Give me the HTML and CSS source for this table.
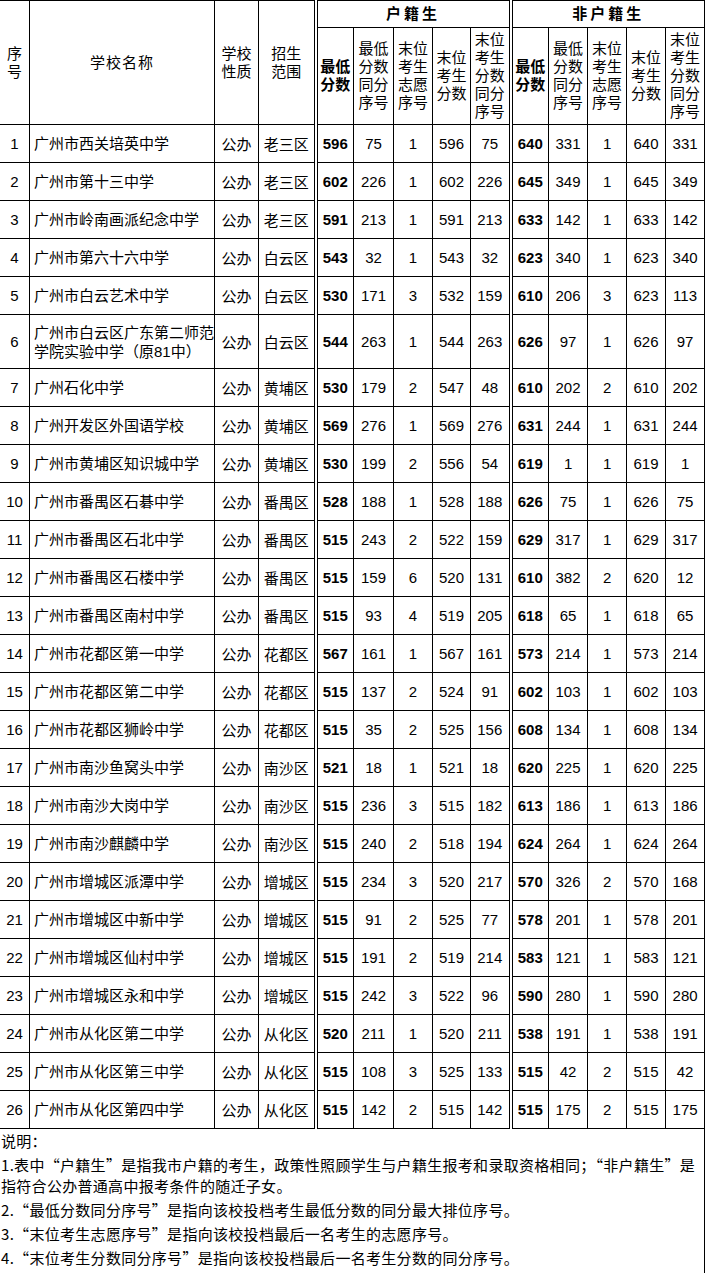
FILE: index.html
```html
<!DOCTYPE html>
<html lang="zh-CN">
<head>
<meta charset="utf-8">
<title>广州市公办普通高中录取分数</title>
<link rel="stylesheet" href="styles.css">
</head>
<body>
<div class="page">
<table class="score-table">
  <colgroup>
    <col class="c-no"><col class="c-name"><col class="c-type"><col class="c-area">
    <col class="c-a1"><col class="c-a2"><col class="c-a3"><col class="c-a4"><col class="c-a5">
    <col class="c-b1"><col class="c-b2"><col class="c-b3"><col class="c-b4"><col class="c-b5">
  </colgroup>
  <thead>
    <tr class="h1">
      <th rowspan="2" class="hd">序<br>号</th>
      <th rowspan="2" class="hd wide">学校名称</th>
      <th rowspan="2" class="hd">学校<br>性质</th>
      <th rowspan="2" class="hd">招生<br>范围</th>
      <th colspan="5" class="group sep">户籍生</th>
      <th colspan="5" class="group sep">非户籍生</th>
    </tr>
    <tr class="h2">
      <th class="hd bold sep">最低<br>分数</th>
      <th class="hd">最低<br>分数<br>同分<br>序号</th>
      <th class="hd">末位<br>考生<br>志愿<br>序号</th>
      <th class="hd">末位<br>考生<br>分数</th>
      <th class="hd">末位<br>考生<br>分数<br>同分<br>序号</th>
      <th class="hd bold sep">最低<br>分数</th>
      <th class="hd">最低<br>分数<br>同分<br>序号</th>
      <th class="hd">末位<br>考生<br>志愿<br>序号</th>
      <th class="hd">末位<br>考生<br>分数</th>
      <th class="hd">末位<br>考生<br>分数<br>同分<br>序号</th>
    </tr>
  </thead>
  <tbody>
    <tr><td class="num">1</td><td class="name">广州市西关培英中学</td><td class="cn">公办</td><td class="cn">老三区</td><td class="num b sep">596</td><td class="num">75</td><td class="num">1</td><td class="num">596</td><td class="num">75</td><td class="num b sep">640</td><td class="num">331</td><td class="num">1</td><td class="num">640</td><td class="num">331</td></tr>
    <tr><td class="num">2</td><td class="name">广州市第十三中学</td><td class="cn">公办</td><td class="cn">老三区</td><td class="num b sep">602</td><td class="num">226</td><td class="num">1</td><td class="num">602</td><td class="num">226</td><td class="num b sep">645</td><td class="num">349</td><td class="num">1</td><td class="num">645</td><td class="num">349</td></tr>
    <tr><td class="num">3</td><td class="name">广州市岭南画派纪念中学</td><td class="cn">公办</td><td class="cn">老三区</td><td class="num b sep">591</td><td class="num">213</td><td class="num">1</td><td class="num">591</td><td class="num">213</td><td class="num b sep">633</td><td class="num">142</td><td class="num">1</td><td class="num">633</td><td class="num">142</td></tr>
    <tr><td class="num">4</td><td class="name">广州市第六十六中学</td><td class="cn">公办</td><td class="cn">白云区</td><td class="num b sep">543</td><td class="num">32</td><td class="num">1</td><td class="num">543</td><td class="num">32</td><td class="num b sep">623</td><td class="num">340</td><td class="num">1</td><td class="num">623</td><td class="num">340</td></tr>
    <tr><td class="num">5</td><td class="name">广州市白云艺术中学</td><td class="cn">公办</td><td class="cn">白云区</td><td class="num b sep">530</td><td class="num">171</td><td class="num">3</td><td class="num">532</td><td class="num">159</td><td class="num b sep">610</td><td class="num">206</td><td class="num">3</td><td class="num">623</td><td class="num">113</td></tr>
    <tr class="tall"><td class="num">6</td><td class="name">广州市白云区广东第二师范<br>学院实验中学（原81中）</td><td class="cn">公办</td><td class="cn">白云区</td><td class="num b sep">544</td><td class="num">263</td><td class="num">1</td><td class="num">544</td><td class="num">263</td><td class="num b sep">626</td><td class="num">97</td><td class="num">1</td><td class="num">626</td><td class="num">97</td></tr>
    <tr><td class="num">7</td><td class="name">广州石化中学</td><td class="cn">公办</td><td class="cn">黄埔区</td><td class="num b sep">530</td><td class="num">179</td><td class="num">2</td><td class="num">547</td><td class="num">48</td><td class="num b sep">610</td><td class="num">202</td><td class="num">2</td><td class="num">610</td><td class="num">202</td></tr>
    <tr><td class="num">8</td><td class="name">广州开发区外国语学校</td><td class="cn">公办</td><td class="cn">黄埔区</td><td class="num b sep">569</td><td class="num">276</td><td class="num">1</td><td class="num">569</td><td class="num">276</td><td class="num b sep">631</td><td class="num">244</td><td class="num">1</td><td class="num">631</td><td class="num">244</td></tr>
    <tr><td class="num">9</td><td class="name">广州市黄埔区知识城中学</td><td class="cn">公办</td><td class="cn">黄埔区</td><td class="num b sep">530</td><td class="num">199</td><td class="num">2</td><td class="num">556</td><td class="num">54</td><td class="num b sep">619</td><td class="num">1</td><td class="num">1</td><td class="num">619</td><td class="num">1</td></tr>
    <tr><td class="num">10</td><td class="name">广州市番禺区石碁中学</td><td class="cn">公办</td><td class="cn">番禺区</td><td class="num b sep">528</td><td class="num">188</td><td class="num">1</td><td class="num">528</td><td class="num">188</td><td class="num b sep">626</td><td class="num">75</td><td class="num">1</td><td class="num">626</td><td class="num">75</td></tr>
    <tr><td class="num">11</td><td class="name">广州市番禺区石北中学</td><td class="cn">公办</td><td class="cn">番禺区</td><td class="num b sep">515</td><td class="num">243</td><td class="num">2</td><td class="num">522</td><td class="num">159</td><td class="num b sep">629</td><td class="num">317</td><td class="num">1</td><td class="num">629</td><td class="num">317</td></tr>
    <tr><td class="num">12</td><td class="name">广州市番禺区石楼中学</td><td class="cn">公办</td><td class="cn">番禺区</td><td class="num b sep">515</td><td class="num">159</td><td class="num">6</td><td class="num">520</td><td class="num">131</td><td class="num b sep">610</td><td class="num">382</td><td class="num">2</td><td class="num">620</td><td class="num">12</td></tr>
    <tr><td class="num">13</td><td class="name">广州市番禺区南村中学</td><td class="cn">公办</td><td class="cn">番禺区</td><td class="num b sep">515</td><td class="num">93</td><td class="num">4</td><td class="num">519</td><td class="num">205</td><td class="num b sep">618</td><td class="num">65</td><td class="num">1</td><td class="num">618</td><td class="num">65</td></tr>
    <tr><td class="num">14</td><td class="name">广州市花都区第一中学</td><td class="cn">公办</td><td class="cn">花都区</td><td class="num b sep">567</td><td class="num">161</td><td class="num">1</td><td class="num">567</td><td class="num">161</td><td class="num b sep">573</td><td class="num">214</td><td class="num">1</td><td class="num">573</td><td class="num">214</td></tr>
    <tr><td class="num">15</td><td class="name">广州市花都区第二中学</td><td class="cn">公办</td><td class="cn">花都区</td><td class="num b sep">515</td><td class="num">137</td><td class="num">2</td><td class="num">524</td><td class="num">91</td><td class="num b sep">602</td><td class="num">103</td><td class="num">1</td><td class="num">602</td><td class="num">103</td></tr>
    <tr><td class="num">16</td><td class="name">广州市花都区狮岭中学</td><td class="cn">公办</td><td class="cn">花都区</td><td class="num b sep">515</td><td class="num">35</td><td class="num">2</td><td class="num">525</td><td class="num">156</td><td class="num b sep">608</td><td class="num">134</td><td class="num">1</td><td class="num">608</td><td class="num">134</td></tr>
    <tr><td class="num">17</td><td class="name">广州市南沙鱼窝头中学</td><td class="cn">公办</td><td class="cn">南沙区</td><td class="num b sep">521</td><td class="num">18</td><td class="num">1</td><td class="num">521</td><td class="num">18</td><td class="num b sep">620</td><td class="num">225</td><td class="num">1</td><td class="num">620</td><td class="num">225</td></tr>
    <tr><td class="num">18</td><td class="name">广州市南沙大岗中学</td><td class="cn">公办</td><td class="cn">南沙区</td><td class="num b sep">515</td><td class="num">236</td><td class="num">3</td><td class="num">515</td><td class="num">182</td><td class="num b sep">613</td><td class="num">186</td><td class="num">1</td><td class="num">613</td><td class="num">186</td></tr>
    <tr><td class="num">19</td><td class="name">广州市南沙麒麟中学</td><td class="cn">公办</td><td class="cn">南沙区</td><td class="num b sep">515</td><td class="num">240</td><td class="num">2</td><td class="num">518</td><td class="num">194</td><td class="num b sep">624</td><td class="num">264</td><td class="num">1</td><td class="num">624</td><td class="num">264</td></tr>
    <tr><td class="num">20</td><td class="name">广州市增城区派潭中学</td><td class="cn">公办</td><td class="cn">增城区</td><td class="num b sep">515</td><td class="num">234</td><td class="num">3</td><td class="num">520</td><td class="num">217</td><td class="num b sep">570</td><td class="num">326</td><td class="num">2</td><td class="num">570</td><td class="num">168</td></tr>
    <tr><td class="num">21</td><td class="name">广州市增城区中新中学</td><td class="cn">公办</td><td class="cn">增城区</td><td class="num b sep">515</td><td class="num">91</td><td class="num">2</td><td class="num">525</td><td class="num">77</td><td class="num b sep">578</td><td class="num">201</td><td class="num">1</td><td class="num">578</td><td class="num">201</td></tr>
    <tr><td class="num">22</td><td class="name">广州市增城区仙村中学</td><td class="cn">公办</td><td class="cn">增城区</td><td class="num b sep">515</td><td class="num">191</td><td class="num">2</td><td class="num">519</td><td class="num">214</td><td class="num b sep">583</td><td class="num">121</td><td class="num">1</td><td class="num">583</td><td class="num">121</td></tr>
    <tr><td class="num">23</td><td class="name">广州市增城区永和中学</td><td class="cn">公办</td><td class="cn">增城区</td><td class="num b sep">515</td><td class="num">242</td><td class="num">3</td><td class="num">522</td><td class="num">96</td><td class="num b sep">590</td><td class="num">280</td><td class="num">1</td><td class="num">590</td><td class="num">280</td></tr>
    <tr><td class="num">24</td><td class="name">广州市从化区第二中学</td><td class="cn">公办</td><td class="cn">从化区</td><td class="num b sep">520</td><td class="num">211</td><td class="num">1</td><td class="num">520</td><td class="num">211</td><td class="num b sep">538</td><td class="num">191</td><td class="num">1</td><td class="num">538</td><td class="num">191</td></tr>
    <tr><td class="num">25</td><td class="name">广州市从化区第三中学</td><td class="cn">公办</td><td class="cn">从化区</td><td class="num b sep">515</td><td class="num">108</td><td class="num">3</td><td class="num">525</td><td class="num">133</td><td class="num b sep">515</td><td class="num">42</td><td class="num">2</td><td class="num">515</td><td class="num">42</td></tr>
    <tr><td class="num">26</td><td class="name">广州市从化区第四中学</td><td class="cn">公办</td><td class="cn">从化区</td><td class="num b sep">515</td><td class="num">142</td><td class="num">2</td><td class="num">515</td><td class="num">142</td><td class="num b sep">515</td><td class="num">175</td><td class="num">2</td><td class="num">515</td><td class="num">175</td></tr>
  </tbody>
  <tfoot>
    <tr>
      <td colspan="14" class="notes">
        <p>说明：</p>
        <p>1.表中“户籍生”是指我市户籍的考生，政策性照顾学生与户籍生报考和录取资格相同；“非户籍生”是<br>指符合公办普通高中报考条件的随迁子女。</p>
        <p>2.“最低分数同分序号”是指向该校投档考生最低分数的同分最大排位序号。</p>
        <p>3.“末位考生志愿序号”是指向该校投档最后一名考生的志愿序号。</p>
        <p>4.“末位考生分数同分序号”是指向该校投档最后一名考生分数的同分序号。</p>
      </td>
    </tr>
  </tfoot>
</table>
</div>
</body>
</html>
```

FILE: styles.css
```css
html, body {
  margin: 0;
  padding: 0;
  background: #fff;
}

.page {
  width: 705px;
  overflow: hidden;
}

.score-table {
  margin-left: -1px;
  width: 705px;
  table-layout: fixed;
  border-collapse: collapse;
  color: #000;
  font-family: "Liberation Sans", "Noto Sans CJK SC", sans-serif;
  font-size: 15px;
}

.c-no { width: 30px; }
.c-name { width: 185px; }
.c-type { width: 44px; }
.c-area { width: 57px; }
.c-a1 { width: 38px; }
.c-a2 { width: 40px; }
.c-a3 { width: 39px; }
.c-a4 { width: 38px; }
.c-a5 { width: 40px; }
.c-b1 { width: 38px; }
.c-b2 { width: 39px; }
.c-b3 { width: 39px; }
.c-b4 { width: 39px; }
.c-b5 { width: 39px; }

.score-table th,
.score-table td {
  border: 1px solid #000;
  padding: 0;
  text-align: center;
  vertical-align: middle;
  overflow: hidden;
}

.score-table .sep {
  border-left: 4px double #000;
}

.h1 { height: 27px; }
.h2 { height: 97px; }

.group {
  font-family: "Liberation Sans", "Noto Sans CJK SC", sans-serif;
  font-weight: 700;
  font-size: 15px;
  letter-spacing: 3px;
  line-height: 20px;
}

.hd {
  font-family: "Liberation Sans", "Noto Sans CJK SC", sans-serif;
  font-weight: 400;
  font-size: 15px;
  line-height: 18px;
}

.hd.wide {
  letter-spacing: 1px;
}

.hd.bold {
  font-weight: 700;
}

tbody tr { height: 38px; }
tbody tr.tall { height: 54px; }

.num {
  font-family: "Liberation Sans", sans-serif;
  font-size: 15px;
}

.num.b {
  font-weight: 700;
}

.name {
  text-align: left !important;
  padding-left: 4px !important;
  font-family: "Liberation Sans", "Noto Sans CJK SC", sans-serif;
  font-size: 15px;
  line-height: 19px;
  white-space: nowrap;
}

.cn {
  font-family: "Liberation Sans", "Noto Sans CJK SC", sans-serif;
  font-size: 15px;
}

.score-table td.notes {
  text-align: left;
  vertical-align: top;
  padding: 1px 0 4px 1px;
  height: 144px;
  font-family: "Noto Sans CJK SC", sans-serif;
  font-size: 15px;
  letter-spacing: 0.3px;
  line-height: 21px;
}

.notes p {
  margin: 0 0 3px 0;
  white-space: nowrap;
}

.notes p:last-child {
  margin-bottom: 0;
}
```
